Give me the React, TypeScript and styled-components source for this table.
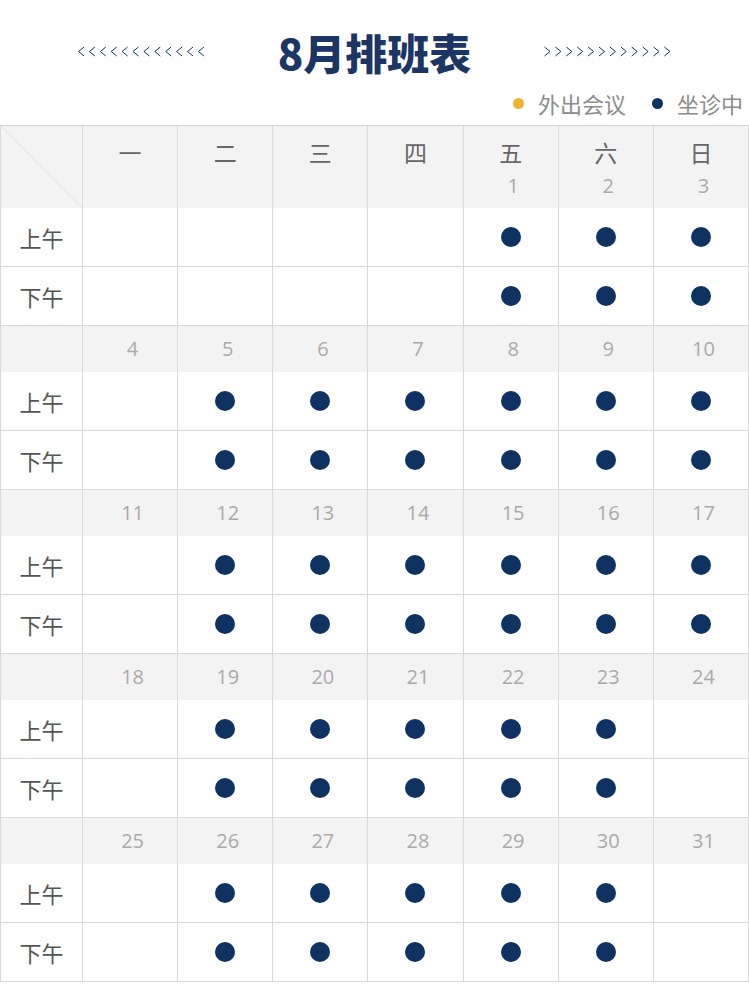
import * as React from "react";
import styled, { createGlobalStyle } from "styled-components";

const GlobalStyle = createGlobalStyle`
  body {
    margin: 0;
    background: #fff;
    font-family: "Noto Sans CJK SC", "Noto Sans", sans-serif;
  }
`;

const NAVY = "#0e3262";
const LINE = "#d9d9d9";
const GRAY_BG = "#f3f3f3";

const Page = styled.div`
  width: 749px;
  padding-top: 28px;
`;

const TitleRow = styled.div`
  display: flex;
  align-items: center;
  justify-content: center;
  gap: 73px;
  height: 48px;
`;

const Title = styled.h1`
  margin: 0;
  font-size: 42px;
  line-height: 48px;
  font-weight: 900;
  color: #1b3565;
`;

const Legend = styled.div`
  display: flex;
  justify-content: flex-end;
  align-items: center;
  gap: 26px;
  padding-right: 6px;
  margin-top: 14px;
  height: 26px;
`;

const LegendItem = styled.div`
  display: flex;
  align-items: center;
  gap: 14px;
  font-size: 22px;
  line-height: 26px;
  color: #8c8c8c;
`;

const Dot = styled.span<{ $color: string; $size: number }>`
  display: inline-block;
  width: ${(p) => p.$size}px;
  height: ${(p) => p.$size}px;
  border-radius: 50%;
  background: ${(p) => p.$color};
`;

const Table = styled.div`
  margin-top: 9px;
  display: grid;
  grid-template-columns: 82px repeat(7, 1fr);
  border-top: 1px solid ${LINE};
  border-left: 1px solid ${LINE};
`;

const Cell = styled.div<{ $kind: "head" | "date" | "slot" }>`
  box-sizing: border-box;
  border-right: 1px solid ${LINE};
  border-bottom: ${(p) => (p.$kind === "slot" ? `1px solid ${LINE}` : "none")};
  background: ${(p) => (p.$kind === "slot" ? "#fff" : GRAY_BG)};
  height: ${(p) => (p.$kind === "head" ? 82 : p.$kind === "date" ? 46 : 59)}px;
  display: flex;
  flex-direction: column;
  align-items: center;
  justify-content: ${(p) => (p.$kind === "head" ? "flex-start" : "center")};
  padding-top: ${(p) => (p.$kind === "head" ? "12px" : "0")};
  position: relative;
`;

const Corner = styled.svg`
  position: absolute;
  inset: 0;
  width: 100%;
  height: 100%;
`;

const Weekday = styled.div`
  font-size: 23px;
  line-height: 28px;
  color: #666;
`;

const Num = styled.div<{ $head?: boolean }>`
  font-family: "Open Sans", "Noto Sans", sans-serif;
  font-size: 20px;
  line-height: 24px;
  color: #aaa;
  padding-left: 5px;
  margin-top: ${(p) => (p.$head ? "8px" : "0")};
`;

const SlotLabel = styled.div`
  font-size: 22px;
  color: #555;
`;

function Chevrons({ dir }: { dir: "left" | "right" }) {
  const items = Array.from({ length: 12 }, (_, i) => {
    const x = i * 10.9 + 0.5;
    const pts =
      dir === "left"
        ? `${x + 5.5},1 ${x},5.5 ${x + 5.5},10`
        : `${x},1 ${x + 5.5},5.5 ${x},10`;
    return <polyline key={i} points={pts} fill="none" stroke={NAVY} strokeWidth="1" />;
  });
  return (
    <svg width="127" height="12" viewBox="0 0 127 12">
      {items}
    </svg>
  );
}

const weekdays = ["一", "二", "三", "四", "五", "六", "日"];

type Week = { days: (number | null)[]; am: number[]; pm: number[] };

const weeks: Week[] = [
  { days: [null, null, null, null, 1, 2, 3], am: [0, 0, 0, 0, 1, 1, 1], pm: [0, 0, 0, 0, 1, 1, 1] },
  { days: [4, 5, 6, 7, 8, 9, 10], am: [0, 1, 1, 1, 1, 1, 1], pm: [0, 1, 1, 1, 1, 1, 1] },
  { days: [11, 12, 13, 14, 15, 16, 17], am: [0, 1, 1, 1, 1, 1, 1], pm: [0, 1, 1, 1, 1, 1, 1] },
  { days: [18, 19, 20, 21, 22, 23, 24], am: [0, 1, 1, 1, 1, 1, 0], pm: [0, 1, 1, 1, 1, 1, 0] },
  { days: [25, 26, 27, 28, 29, 30, 31], am: [0, 1, 1, 1, 1, 1, 0], pm: [0, 1, 1, 1, 1, 1, 0] },
];

function SlotRow({ label, marks }: { label: string; marks: number[] }) {
  return (
    <>
      <Cell $kind="slot">
        <SlotLabel>{label}</SlotLabel>
      </Cell>
      {marks.map((m, i) => (
        <Cell $kind="slot" key={i}>
          {m ? <Dot $color={NAVY} $size={20} /> : null}
        </Cell>
      ))}
    </>
  );
}

export default function App() {
  return (
    <Page>
      <GlobalStyle />
      <TitleRow>
        <Chevrons dir="left" />
        <Title>8月排班表</Title>
        <Chevrons dir="right" />
      </TitleRow>
      <Legend>
        <LegendItem>
          <Dot $color="#f0b22e" $size={11} />
          外出会议
        </LegendItem>
        <LegendItem>
          <Dot $color={NAVY} $size={11} />
          坐诊中
        </LegendItem>
      </Legend>
      <Table>
        {weeks.map((w, wi) => (
          <React.Fragment key={wi}>
            {wi === 0 ? (
              <>
                <Cell $kind="head">
                  <Corner viewBox="0 0 81 82" preserveAspectRatio="none">
                    <line x1="0" y1="0" x2="81" y2="82" stroke="#e2e2e2" strokeWidth="1" />
                  </Corner>
                </Cell>
                {weekdays.map((d, i) => (
                  <Cell $kind="head" key={d}>
                    <Weekday>{d}</Weekday>
                    {w.days[i] !== null ? <Num $head>{w.days[i]}</Num> : null}
                  </Cell>
                ))}
              </>
            ) : (
              <>
                <Cell $kind="date" />
                {w.days.map((n, i) => (
                  <Cell $kind="date" key={i}>
                    <Num>{n}</Num>
                  </Cell>
                ))}
              </>
            )}
            <SlotRow label="上午" marks={w.am} />
            <SlotRow label="下午" marks={w.pm} />
          </React.Fragment>
        ))}
      </Table>
    </Page>
  );
}
